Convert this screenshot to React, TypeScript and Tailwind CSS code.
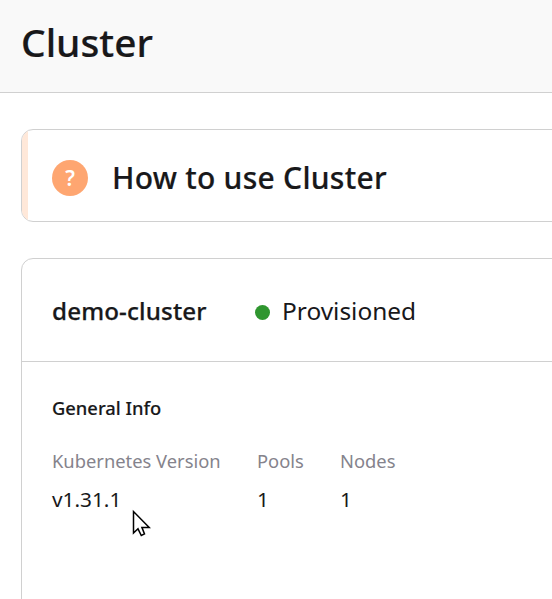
export default function App() {
  return (
    <div className="h-[599px] w-[552px] overflow-hidden bg-white font-['Noto_Sans',sans-serif] text-[#18181a]">
      <header className="flex h-[93px] items-center border-b border-[#d0d0d0] bg-[#f9f9f9] pb-[8px] pl-[21px]">
        <h1 className="text-[38.8px] leading-[52px] font-medium [-webkit-text-stroke:0.2px]">Cluster</h1>
      </header>
      <main className="w-[700px] pt-9 pl-[21px]">
        <section className="flex h-[93px] items-center overflow-hidden rounded-xl border border-[#d0d0d0]">
          <div className="h-full w-[6px] bg-[#ffe8d9]" />
          <div className="mt-1 ml-[24px] flex size-9 items-center justify-center rounded-full bg-[#fea671] text-[21px] font-semibold text-white"><span className="mt-0.5">?</span></div>
          <h2 className="mt-[5px] ml-[24px] text-[30px] leading-[40px] font-medium tracking-[0.26px] whitespace-nowrap [-webkit-text-stroke:0.2px]">How to use Cluster</h2>
        </section>
        <section className="mt-9 h-[400px] rounded-xl border border-[#d0d0d0]">
          <div className="flex h-[103px] items-center border-b border-[#d0d0d0] pt-[3px] pl-[30px]">
            <span className="w-[203px] text-[24.2px] font-medium tracking-[0.14px] [-webkit-text-stroke:0.25px]">demo-cluster</span>
            <span className="mt-px size-[15px] rounded-full bg-[#2f962f]" />
            <span className="ml-3 text-[24.45px]">Provisioned</span>
          </div>
          <div className="pt-[33px] pl-[30px]">
            <h3 className="text-[18.35px] leading-[26px] font-medium [-webkit-text-stroke:0.15px]">General Info</h3>
            <div className="mt-[27px] flex text-[18.35px] leading-[26px]">
              <div className="w-[205px]"><div className="text-[#85838c]">Kubernetes Version</div><div className="mt-[12px] text-[20.8px]">v1.31.1</div></div>
              <div className="w-[83px]"><div className="text-[#85838c]">Pools</div><div className="mt-[12px] text-[20.8px]">1</div></div>
              <div><div className="text-[#85838c]">Nodes</div><div className="mt-[12px] text-[20.8px]">1</div></div>
            </div>
          </div>
        </section>
      </main>
      <svg className="absolute top-[509px] left-[132px]" width="20" height="30" viewBox="0 0 20 30">
        <path d="M1.5 2.5v21.5l4.5-4.2 3.3 6.7 3.2-1.6-2.6-6.5h7.3z" fill="#fff" stroke="#000" strokeWidth="1.5" />
      </svg>
    </div>
  );
}
